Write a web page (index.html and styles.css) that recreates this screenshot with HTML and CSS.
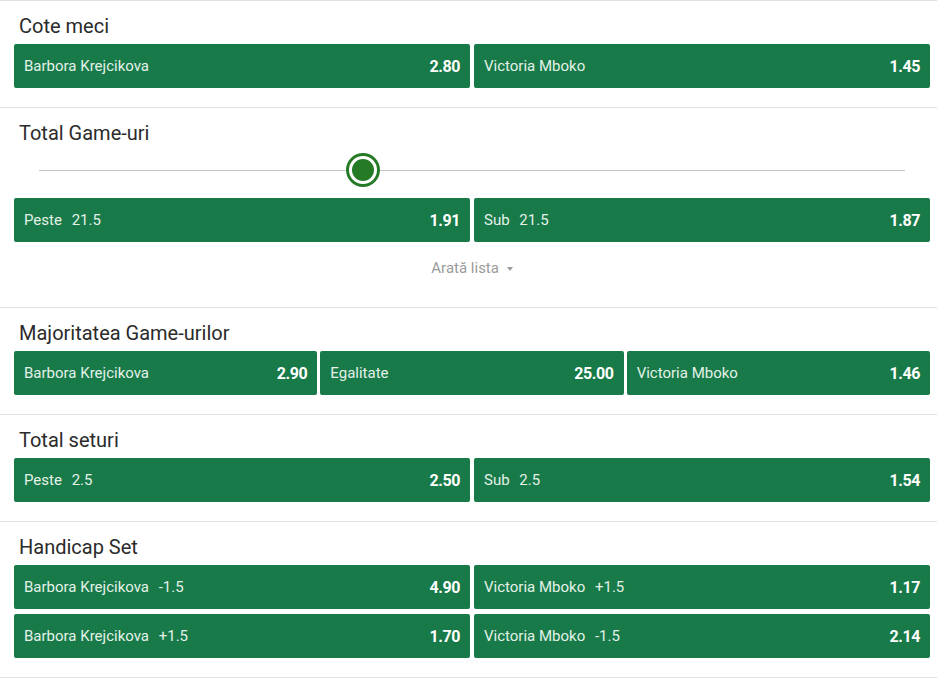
FILE: index.html
```html
<!DOCTYPE html>
<html lang="ro">
<head>
    <meta charset="UTF-8">
    <title>Cote meci</title>
    <meta name="viewport" content="width=device-width, initial-scale=1.0">
    <link rel="stylesheet" href="styles.css">
</head>
<body>
    <div class="markets">
        <div class="market first">
            <h3 class="market-title">Cote meci</h3>
            <div class="odds cols-2">
                <div class="odd"><span class="label">Barbora Krejcikova</span><span class="price">2.80</span></div>
                <div class="odd"><span class="label">Victoria Mboko</span><span class="price">1.45</span></div>
            </div>
        </div>

        <div class="market">
            <h3 class="market-title">Total Game-uri</h3>
            <div class="slider">
                <div class="track">
                    <span class="thumb" style="left: 37.4%"></span>
                </div>
            </div>
            <div class="odds cols-2">
                <div class="odd"><span class="label">Peste <span class="line">21.5</span></span><span class="price">1.91</span></div>
                <div class="odd"><span class="label">Sub <span class="line">21.5</span></span><span class="price">1.87</span></div>
            </div>
            <div class="show-list">Arată lista <span class="caret"></span></div>
        </div>

        <div class="market">
            <h3 class="market-title">Majoritatea Game-urilor</h3>
            <div class="odds cols-3">
                <div class="odd"><span class="label">Barbora Krejcikova</span><span class="price">2.90</span></div>
                <div class="odd"><span class="label">Egalitate</span><span class="price">25.00</span></div>
                <div class="odd"><span class="label">Victoria Mboko</span><span class="price">1.46</span></div>
            </div>
        </div>

        <div class="market">
            <h3 class="market-title">Total seturi</h3>
            <div class="odds cols-2">
                <div class="odd"><span class="label">Peste <span class="line">2.5</span></span><span class="price">2.50</span></div>
                <div class="odd"><span class="label">Sub <span class="line">2.5</span></span><span class="price">1.54</span></div>
            </div>
        </div>

        <div class="market">
            <h3 class="market-title">Handicap Set</h3>
            <div class="odds cols-2">
                <div class="odd"><span class="label">Barbora Krejcikova <span class="line">-1.5</span></span><span class="price">4.90</span></div>
                <div class="odd"><span class="label">Victoria Mboko <span class="line">+1.5</span></span><span class="price">1.17</span></div>
                <div class="odd"><span class="label">Barbora Krejcikova <span class="line">+1.5</span></span><span class="price">1.70</span></div>
                <div class="odd"><span class="label">Victoria Mboko <span class="line">-1.5</span></span><span class="price">2.14</span></div>
            </div>
        </div>
    </div>
</body>
</html>
```

FILE: styles.css
```css
body {
    margin: 0;
    background: #fff;
    font-family: Roboto, "Liberation Sans", Arial, sans-serif;
    color: #222;
}
.market {
    border-bottom: 1px solid #e2e2e2;
    padding: 13px 7px 19px 14px;
}
.market.first {
    border-top: 1px solid #e2e2e2;
}
.market-title {
    margin: 0 0 6px 5px;
    font-size: 20px;
    line-height: 24px;
    font-weight: 400;
    color: #2b2b2b;
}
.odds {
    display: grid;
    column-gap: 4px;
    row-gap: 5px;
}
.cols-2 {
    grid-template-columns: 1fr 1fr;
}
.cols-3 {
    grid-template-columns: 1fr 1fr 1fr;
    column-gap: 3px;
}
.odd {
    display: flex;
    align-items: center;
    justify-content: space-between;
    height: 44px;
    padding: 0 10px;
    background: #177a48;
    border-radius: 2px;
}
.label {
    color: #e4f1e8;
    font-size: 15px;
}
.line {
    margin-left: 6px;
}
.price {
    color: #fff;
    font-size: 16px;
    font-weight: 700;
    letter-spacing: -0.4px;
}
.slider {
    box-sizing: border-box;
    height: 47px;
    padding: 19px 25px 0;
}
.track {
    position: relative;
    height: 1px;
    background: #c4c4c4;
}
.thumb {
    position: absolute;
    top: -14px;
    width: 22px;
    height: 22px;
    margin-left: -14px;
    border-radius: 50%;
    background: #257a25;
    border: 3px solid #fff;
    box-shadow: 0 0 0 3px #257a25;
}
.show-list {
    padding: 16px 0 10px;
    line-height: 20px;
    text-align: center;
    font-size: 15px;
    color: #9b9b9b;
}
.caret {
    display: inline-block;
    width: 0;
    height: 0;
    margin-left: 4px;
    vertical-align: middle;
    border-left: 3px solid transparent;
    border-right: 3px solid transparent;
    border-top: 4px solid #9b9b9b;
}
```
